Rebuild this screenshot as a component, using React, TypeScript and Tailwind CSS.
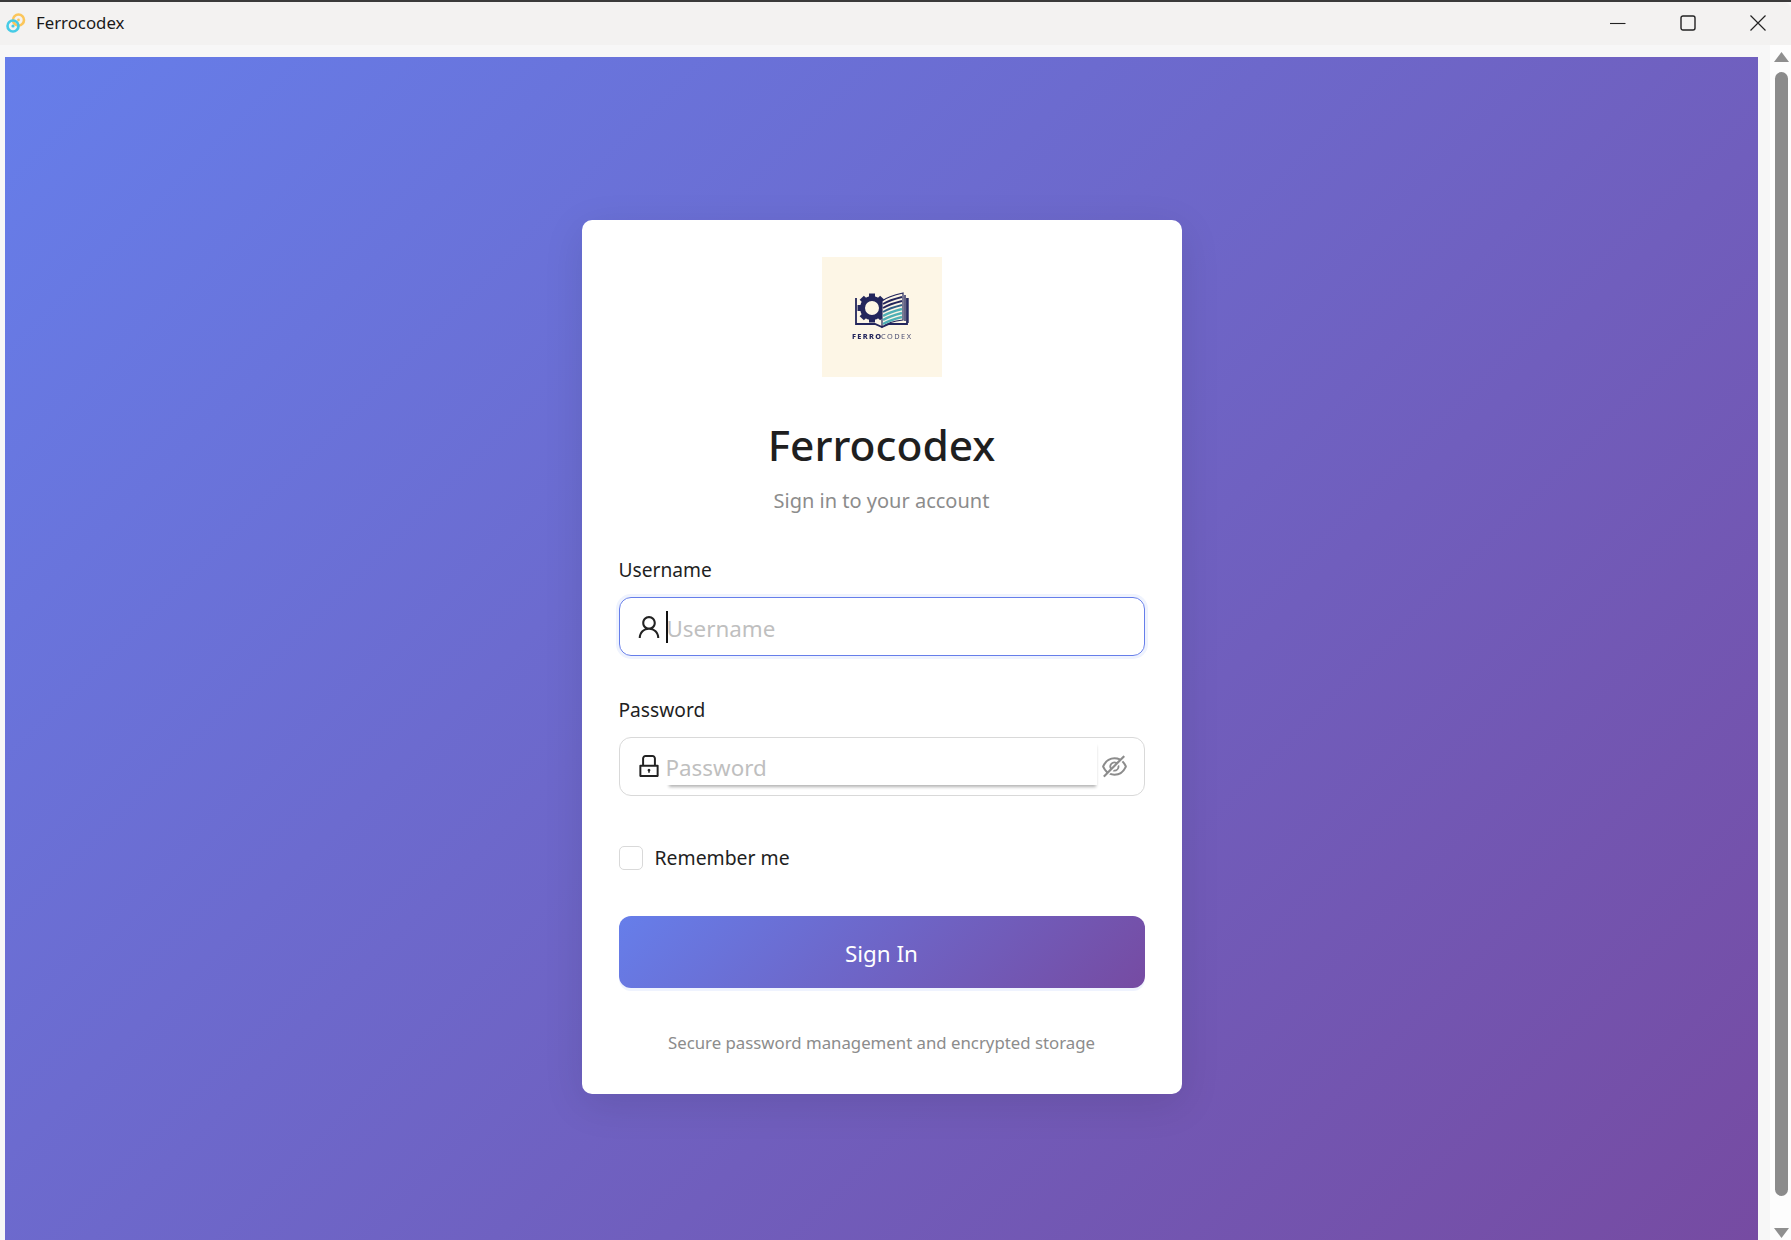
import { AiOutlineUser, AiOutlineLock, AiOutlineEyeInvisible } from "react-icons/ai";

function AppIcon() {
  return (
    <svg width="20" height="22" viewBox="0 0 20 22" fill="none">
      <circle cx="12.5" cy="8" r="5.5" stroke="#fbc65a" strokeWidth="2.6" />
      <circle cx="7" cy="14" r="5.5" stroke="#46cbe6" strokeWidth="2.6" />
      <circle cx="7" cy="14" r="1.6" fill="#46cbe6" />
      <circle cx="12.5" cy="8" r="1.4" fill="#fbc65a" />
    </svg>
  );
}

function Logo() {
  const teeth = [0, 45, 90, 135, 180, 225, 270, 315];
  return (
    <div className="w-[120px] h-[120px] bg-[#fdf6e6] mx-auto">
      <svg className="blur-[0.4px]" width="120" height="120" viewBox="0 0 120 120" fill="none">
        <g transform="translate(50 51)">
          {teeth.map((a) => (
            <rect key={a} x="-3" y="-14.5" width="6" height="6" fill="#23265c" transform={`rotate(${a})`} />
          ))}
          <circle r="9.5" fill="none" stroke="#23265c" strokeWidth="5" />
          <circle r="5.6" fill="none" stroke="#fdf6e6" strokeWidth="1" />
        </g>
        <path d="M34 41v26h19l7 3 7-3h18V41" stroke="#23265c" strokeWidth="1.8" fill="none" />
        <path d="M60 44c5-4 12-6 21-8v27c-9 1-16 3-21 7z" fill="#fdf6e6" stroke="#23265c" strokeWidth="1.2" />
        <path d="M61 47c5-3 11-5 19-7M61 51c5-3 11-5 19-7" stroke="#23265c" strokeWidth="2" />
        <path d="M61 55c5-3 11-5 19-7" stroke="#2f5f86" strokeWidth="2" />
        <path d="M61 59c5-3 11-5 19-7M61 63c5-3 11-5 19-7M61 67c5-3 11-5 19-7" stroke="#4fb0b5" strokeWidth="2.4" />
        <path d="M83 38v26M86 41v25" stroke="#23265c" strokeWidth="1.4" />
        <text x="30" y="82" fontSize="7.4" fontWeight="800" fill="#23265c" fontFamily="'Noto Sans', sans-serif" textLength="29">FERRO</text>
        <text x="59" y="82" fontSize="7.4" fontWeight="400" fill="#4a4d72" fontFamily="'Noto Sans', sans-serif" textLength="30">CODEX</text>
      </svg>
    </div>
  );
}

function TitleBar() {
  return (
    <div className="h-[43px] shrink-0 bg-[#f3f2f1] rounded-tr-lg flex items-center pb-[2px]">
      <div className="pl-[6px] w-[36px]">
        <AppIcon />
      </div>
      <span className="text-[16.8px] text-[#1a1a1a] font-['Noto_Sans',sans-serif]">Ferrocodex</span>
      <div className="ml-auto flex items-center pr-[25px] gap-[54px]">
        <svg width="16" height="16" viewBox="0 0 16 16"><path d="M0 8.5h15.5" stroke="#222" strokeWidth="1.1" /></svg>
        <svg width="16" height="16" viewBox="0 0 16 16" fill="none"><rect x="1" y="1" width="14" height="14" rx="2" stroke="#222" strokeWidth="1.4" /></svg>
        <svg width="16" height="16" viewBox="0 0 16 16" fill="none"><path d="M.5.5l15 15M15.5.5l-15 15" stroke="#222" strokeWidth="1.2" /></svg>
      </div>
    </div>
  );
}

function Scrollbar() {
  return (
    <div className="w-[21px] shrink-0 bg-[#fdfdfd] flex flex-col items-center pl-[1px] pt-[7px]">
      <svg width="15" height="10" viewBox="0 0 15 10"><path d="M7.5 0 15 10H0z" fill="#8f8f8f" /></svg>
      <div className="w-[13px] h-[1124px] mt-[10px] rounded-full bg-[#8b8b8b]" />
      <svg className="mt-[32px]" width="15" height="10" viewBox="0 0 15 10"><path d="M0 0h15L7.5 10z" fill="#8f8f8f" /></svg>
    </div>
  );
}

function Card() {
  return (
    <div className="w-[600px] h-[874px] bg-white rounded-[10px] shadow-[0_10px_40px_rgba(0,0,0,0.1)] px-[37px] pt-[37px] font-['Noto_Sans',sans-serif]">
      <Logo />
      <h1 className="mt-[40px] text-center text-[42.5px] leading-[56px] font-[510] text-[#1f1f1f]">Ferrocodex</h1>
      <p className="mt-[12px] text-center text-[20px] leading-[32px] text-[#8c8c8c]">Sign in to your account</p>

      <label className="block mt-[38px] text-[19.2px] leading-[30px] text-[#1f1f1f]">Username</label>
      <div className="mt-[12px] h-[59px] rounded-[12px] border border-[#667eea] shadow-[0_0_0_3px_#eff3fe] flex items-center pl-[15px]">
        <AiOutlineUser className="text-[#222] shrink-0" size={28} />
        <span className="ml-[3px] w-[2px] h-[32px] bg-[#111] shrink-0" />
        <span className="text-[22.4px] font-[450] text-[#bfbfbf] -ml-[1px] mt-[4px]">Username</span>
      </div>

      <label className="block mt-[39px] text-[19.2px] leading-[30px] text-[#1f1f1f]">Password</label>
      <div className="mt-[12px] h-[59px] rounded-[12px] border border-[#d9d9d9] flex items-start pl-[15px]">
        <AiOutlineLock className="text-[#222] shrink-0 mt-[14px]" size={28} />
        <div className="ml-[3px] mt-[2px] w-[431px] h-[45px] bg-white shadow-[1px_4px_3px_-2px_rgba(0,0,0,0.3)] text-[22.4px] font-[450] leading-[56px] text-[#bfbfbf] shrink-0">Password</div>
        <AiOutlineEyeInvisible className="text-[#8c8c8c] shrink-0 ml-[3px] mt-[14px]" size={29} />
      </div>

      <div className="mt-[50px] h-[24px] flex items-center">
        <div className="w-[24px] h-[24px] rounded-[5px] border border-[#d9d9d9] bg-white" />
        <span className="ml-[12px] text-[19.4px] text-[#1f1f1f]">Remember me</span>
      </div>

      <button className="mt-[46px] w-full h-[72px] pt-[3px] rounded-[12px] bg-[linear-gradient(135deg,#667eea_0%,#764ba2_100%)] shadow-[0_3px_0_#eff3fe] text-white text-[22.4px]">Sign In</button>

      <p className="mt-[41px] text-center text-[16.8px] leading-[28px] text-[#8c8c8c]">Secure password management and encrypted storage</p>
    </div>
  );
}

export default function App() {
  return (
    <div className="w-[1791px] h-[1240px] overflow-hidden bg-[#f7f7f7] border-t-2 border-[#3a3a3a] flex flex-col">
      <TitleBar />
      <div className="flex-1 min-h-0 flex">
        <div className="flex-1 min-w-0 pl-[5px] pr-[12px] pt-[12px] flex">
          <div className="flex-1 bg-[linear-gradient(135deg,#667eea_0%,#764ba2_100%)] flex justify-center pt-[163px]">
            <Card />
          </div>
        </div>
        <Scrollbar />
      </div>
    </div>
  );
}
